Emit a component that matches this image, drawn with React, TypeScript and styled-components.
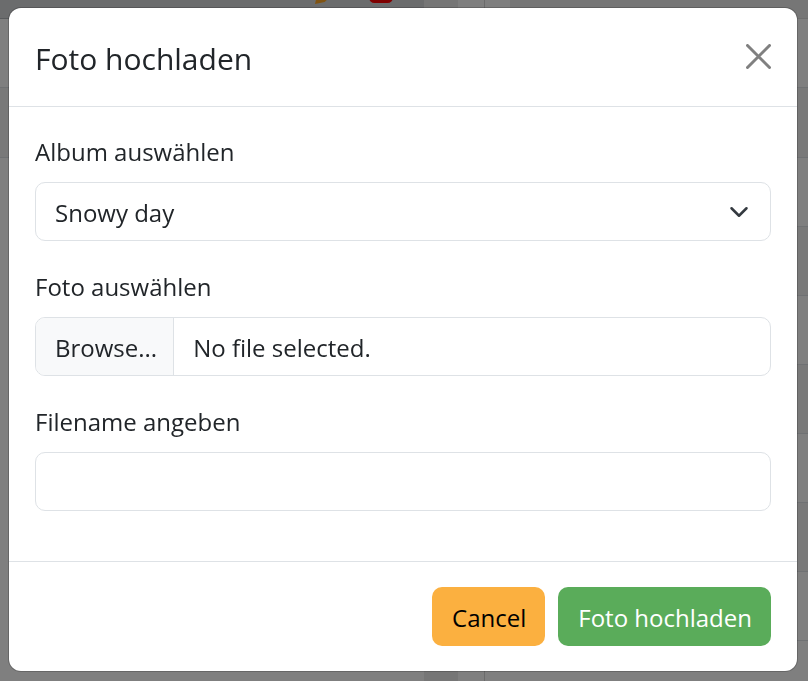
import React, { useState } from 'react';
import styled, { createGlobalStyle } from 'styled-components';

const GlobalStyle = createGlobalStyle`
  * { box-sizing: border-box; }
  body {
    margin: 0;
    overflow: hidden;
    font-family: "Segoe UI", "Open Sans", "Noto Sans", sans-serif;
    font-size: 24px;
    line-height: 38px;
    color: #212529;
  }
`;

const Page = styled.div`
  display: flex;
  height: 100vh;
  overflow: hidden;
  background: #ffffff;
`;

const AlbumList = styled.section`
  flex: 0 1 424px;
`;

const AlbumToolbar = styled.div`
  display: flex;
  align-items: flex-end;
  gap: 38px;
  height: 19px;
  padding: 0 31px 15px 0;
  justify-content: flex-end;
  background: #d6d8db;
  border-bottom: 1px solid #b3b7bb;

  svg { display: block; flex: none; }
`;

const Scrollbar = styled.div`
  flex: none;
  width: 34px;
  background: #ededed;
`;

const Gutter = styled.div`
  flex: none;
  width: 27px;
  border-right: 1px solid #d6d6d6;
`;

const Details = styled.section`
  flex: 1;
`;

const DetailsHead = styled.div`
  height: 19px;
  margin-left: 25px;
  background: #ededed;
  border-bottom: 1px solid #dddddd;
`;

const Row = styled.div<{ $shaded?: boolean }>`
  height: 69px;
  border-bottom: 1px solid #dee2e6;
  background: ${({ $shaded }) => ($shaded ? '#f2f2f2' : '#ffffff')};

  &:nth-child(3) { height: 70px; }
`;

const Backdrop = styled.div`
  position: fixed;
  inset: 0;
  padding: 8px 11px 10px 9px;
  background: rgba(0, 0, 0, 0.5);
`;

const Dialog = styled.form`
  display: flex;
  flex-direction: column;
  background: #ffffff;
  border-radius: 12px;
  box-shadow: 0 0 0 1px rgba(0, 0, 0, 0.2);
`;

const Header = styled.header`
  display: flex;
  align-items: center;
  justify-content: space-between;
  padding: 28px 26px 24px;
  border-bottom: 1px solid #dee2e6;
`;

const Title = styled.h1`
  margin: 0;
  font-size: 30px;
  font-weight: 400;
  line-height: 46px;
`;

const CloseButton = styled.button`
  display: flex;
  padding: 0;
  margin-bottom: 5px;
  border: 0;
  background: none;
  color: #808080;
`;

const Body = styled.div`
  display: flex;
  flex-direction: column;
  gap: 27px;
  padding: 26px 26px 50px;
`;

const Field = styled.div`
  display: flex;
  flex-direction: column;
  gap: 11px;
`;

const Label = styled.label``;

const controlFrame = `
  width: 100%;
  height: 59px;
  border: 1px solid #dee2e6;
  border-radius: 10px;
  background: #ffffff;
  color: #212529;
  font: inherit;
`;

const SelectFrame = styled.div`
  display: grid;
  align-items: center;

  > * { grid-area: 1 / 1; }
  svg {
    justify-self: end;
    margin-right: 22px;
    pointer-events: none;
  }
`;

const Select = styled.select`
  ${controlFrame}
  appearance: none;
  padding: 2px 60px 0 19px;
`;

const FileFrame = styled.div`
  ${controlFrame}
  display: grid;
  grid-template-columns: auto 1fr;
  overflow: hidden;
  line-height: 59px;
`;

const FileInput = styled.input`
  grid-area: 1 / 1 / 2 / 3;
  z-index: 1;
  width: 100%;
  height: 57px;
  opacity: 0;
`;

const BrowsePart = styled.span`
  grid-area: 1 / 1;
  padding: 0 16px 0 19px;
  border-right: 1px solid #dee2e6;
  background: #f8f9fa;
`;

const FileName = styled.span`
  grid-area: 1 / 2;
  padding: 0 19px;
`;

const TextInput = styled.input`
  ${controlFrame}
  padding: 0 19px;
`;

const Footer = styled.footer`
  display: flex;
  justify-content: flex-end;
  gap: 13px;
  padding: 25px 26px;
  border-top: 1px solid #dee2e6;
`;

const Button = styled.button<{ $tone: 'warning' | 'success' }>`
  height: 59px;
  padding: 2px 19px 0 20px;
  border: 0;
  border-radius: 10px;
  background: ${({ $tone }) => ($tone === 'warning' ? '#fbb040' : '#5aac5a')};
  color: ${({ $tone }) => ($tone === 'warning' ? '#000000' : '#ffffff')};
  font: inherit;
`;

const rows = [false, true, false, true, false, true, false, true, false];

export default function App() {
  const [fileName, setFileName] = useState('No file selected.');

  return (
    <>
      <GlobalStyle />
      <Page aria-hidden="true">
        <AlbumList>
          <AlbumToolbar>
            <svg width="16" height="26" viewBox="0 0 16 26" fill="none" stroke="#ffa726" strokeWidth="3" overflow="visible">
              <path d="M4 16 L2 25 L9 23.5 L15 18" />
            </svg>
            <svg width="24" height="24" viewBox="0 0 24 24" fill="none" stroke="#ff0000" strokeWidth="3">
              <rect x="1.5" y="1.5" width="21" height="21" rx="4" />
            </svg>
          </AlbumToolbar>
          <Row />
          <Row $shaded />
        </AlbumList>
        <Scrollbar />
        <Gutter />
        <Details>
          <DetailsHead />
          {rows.map((shaded, i) => (
            <Row key={i} $shaded={shaded} />
          ))}
        </Details>
      </Page>
      <Backdrop>
        <Dialog role="dialog" aria-modal="true" aria-labelledby="dialog-title" onSubmit={(e) => e.preventDefault()}>
          <Header>
            <Title id="dialog-title">Foto hochladen</Title>
            <CloseButton type="button" aria-label="Close">
              <svg width="25" height="25" viewBox="0 0 25 25" fill="none" stroke="currentColor" strokeWidth="3" strokeLinecap="round">
                <path d="M1.5 1.5 L23.5 23.5 M23.5 1.5 L1.5 23.5" />
              </svg>
            </CloseButton>
          </Header>
          <Body>
            <Field>
              <Label htmlFor="album">Album auswählen</Label>
              <SelectFrame>
                <Select id="album" defaultValue="snowy">
                  <option value="snowy">Snowy day</option>
                </Select>
                <svg width="20" height="20" viewBox="0 0 16 16" fill="none" stroke="#343a40" strokeWidth="2" strokeLinecap="round" strokeLinejoin="round">
                  <path d="m2 5 6 6 6-6" />
                </svg>
              </SelectFrame>
            </Field>
            <Field>
              <Label htmlFor="photo">Foto auswählen</Label>
              <FileFrame>
                <BrowsePart aria-hidden="true">Browse...</BrowsePart>
                <FileName>{fileName}</FileName>
                <FileInput
                  id="photo"
                  type="file"
                  onChange={(e) => setFileName(e.target.files?.[0]?.name ?? 'No file selected.')}
                />
              </FileFrame>
            </Field>
            <Field>
              <Label htmlFor="filename">Filename angeben</Label>
              <TextInput id="filename" type="text" />
            </Field>
          </Body>
          <Footer>
            <Button type="button" $tone="warning">Cancel</Button>
            <Button type="submit" $tone="success">Foto hochladen</Button>
          </Footer>
        </Dialog>
      </Backdrop>
    </>
  );
}
